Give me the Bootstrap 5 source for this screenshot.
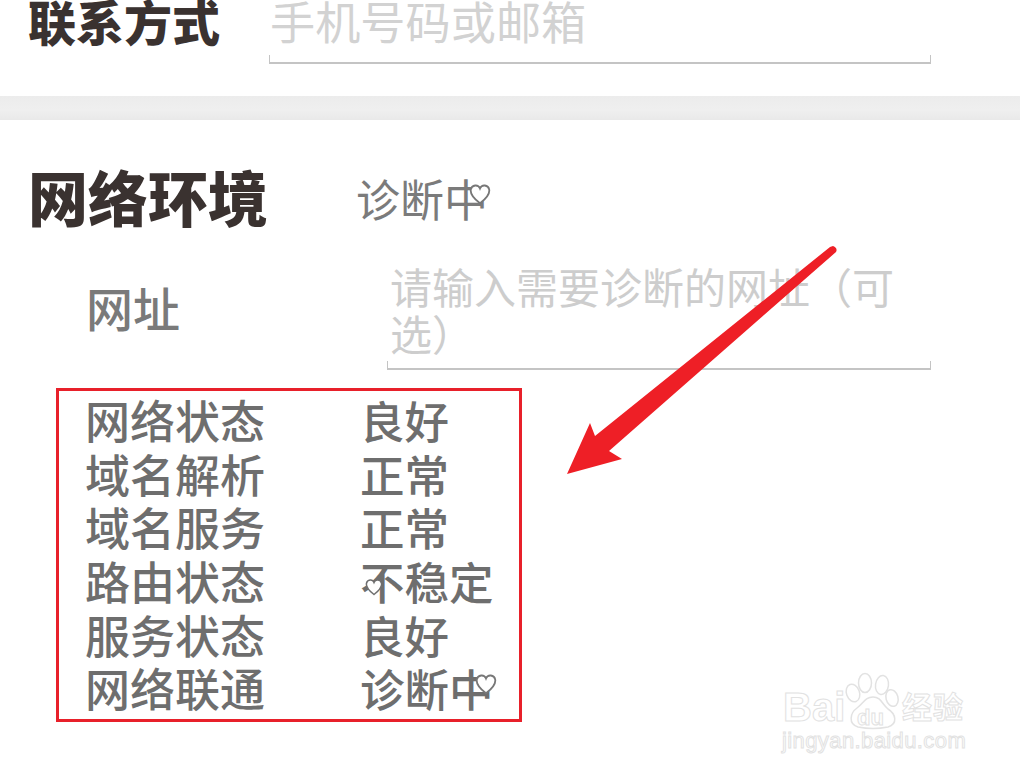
<!DOCTYPE html>
<html lang="zh-CN">
<head>
<meta charset="utf-8">
<title>网络环境</title>
<link href="https://cdn.jsdelivr.net/npm/bootstrap@5.3.0/dist/css/bootstrap.min.css" rel="stylesheet">
<style>
html,body{height:771px;overflow:hidden;background:#fff}
body{position:relative;font-family:"Liberation Sans","Noto Sans CJK SC",sans-serif}
.sheet{width:1020px;height:771px}
.contact-row{height:96px;padding-left:28px}
.contact-label{width:241px;font-size:48px;line-height:50px;font-weight:900;color:#3a3230}
.field-wrap{width:662px;height:64px;position:relative}
.field-line{border-bottom:2px solid #c4c4c4;border-left:1px solid #c4c4c4;border-right:1px solid #c4c4c4;height:9px;position:absolute;left:0;right:0;bottom:0}
.ph-text{color:#d2d2d2;font-size:45.2px;line-height:50px;padding-left:1px}
.band{height:24px;background:linear-gradient(#ececec,#efefef 60%,#e9e9e9)}
.env-head{padding:46px 0 0 28px;height:146px}
.env-title{width:328px;font-size:60px;line-height:72px;font-weight:900;color:#3a3230}
.env-state{font-size:44px;line-height:72px;color:#7b7b7b;font-weight:400}
.url-row{padding-left:86px;height:122px}
.url-label{width:301px;font-size:47px;line-height:50px;color:#7a7a7a;margin-top:20px;font-weight:500}
.url-field{width:544px;height:104px;position:relative}
.url-ph{color:#cdcdcd;font-size:42px;line-height:47px;padding:0 30px 0 3px}
.status-box{width:466px;height:334px;margin-left:56px;border:3px solid #e8202a;padding:6px 0 0 26px}
.status-row{height:53.7px;font-size:44.5px;line-height:53.7px;color:#6e6e6e;font-weight:500}
.status-name{width:275px;font-size:45px}
.heart-ch{position:relative}
.heart-icon{position:absolute;fill:#fff;stroke:#777;stroke-width:2}
.heart-zhong{right:-3px;top:6px;width:22px;height:22px}
.heart-bu{left:5px;top:18px;width:18px;height:18px;stroke:#6e6e6e}
.arrow-layer{position:absolute;left:0;top:0;pointer-events:none}
.mark-wrap{position:absolute;left:782px;top:660px;width:190px;height:100px}
.mark-paw{position:absolute;left:62px;top:12px}
.mark-word{position:absolute;color:#fff;-webkit-text-stroke:1px #e2e2e2;font-weight:700;white-space:nowrap}
.mark-bai{left:1px;top:22px;font-size:40px;line-height:50px}
.mark-du{left:75px;top:45px;font-size:22px;line-height:26px}
.mark-cn{left:120px;top:28px;font-size:30px;line-height:40px;letter-spacing:1px}
.mark-url{left:0;top:66px;font-size:22px;line-height:30px;font-weight:400;letter-spacing:.4px}
</style>
</head>
<body>
<div class="sheet">
  <div class="contact-row d-flex align-items-start">
    <div class="contact-label">联系方式</div>
    <div class="field-wrap">
      <div class="ph-text">手机号码或邮箱</div>
      <div class="field-line"></div>
    </div>
  </div>
  <div class="band"></div>
  <div class="env-head d-flex align-items-start">
    <div class="env-title">网络环境</div>
    <div class="env-state">诊断<span class="heart-ch">中<svg class="heart-icon heart-zhong" viewBox="0 0 24 24"><path d="M12 22 C4 16 1 12 2 7 C3 2 10 1 12 6 C14 1 21 2 22 7 C23 12 20 16 12 22 Z"/></svg></span></div>
  </div>
  <div class="url-row d-flex align-items-start">
    <div class="url-label">网址</div>
    <div class="url-field">
      <div class="url-ph">请输入需要诊断的网址（可选）</div>
      <div class="field-line"></div>
    </div>
  </div>
  <div class="status-box">
    <div class="status-row d-flex"><div class="status-name">网络状态</div><div>良好</div></div>
    <div class="status-row d-flex"><div class="status-name">域名解析</div><div>正常</div></div>
    <div class="status-row d-flex"><div class="status-name">域名服务</div><div>正常</div></div>
    <div class="status-row d-flex"><div class="status-name">路由状态</div><div><span class="heart-ch">不<svg class="heart-icon heart-bu" viewBox="0 0 24 24"><path d="M12 22 C4 16 1 12 2 7 C3 2 10 1 12 6 C14 1 21 2 22 7 C23 12 20 16 12 22 Z"/></svg></span>稳定</div></div>
    <div class="status-row d-flex"><div class="status-name">服务状态</div><div>良好</div></div>
    <div class="status-row d-flex"><div class="status-name">网络联通</div><div>诊断<span class="heart-ch">中<svg class="heart-icon heart-zhong" viewBox="0 0 24 24"><path d="M12 22 C4 16 1 12 2 7 C3 2 10 1 12 6 C14 1 21 2 22 7 C23 12 20 16 12 22 Z"/></svg></span></div></div>
  </div>
</div>
<svg class="arrow-layer" width="1020" height="771" viewBox="0 0 1020 771">
  <path d="M833 246 Q838 248 836 252 L609 451 L622 459 L567 474 L590 423 L595 436 L830 247 Z" fill="#ee1f26"/>
</svg>
<div class="mark-wrap">
  <svg class="mark-paw" width="58" height="60" viewBox="0 0 58 60" fill="#fff" stroke="#e2e2e2" stroke-width="1.5">
    <ellipse cx="9" cy="21" rx="6.5" ry="9" transform="rotate(-20 9 21)"/>
    <ellipse cx="21" cy="11" rx="6.5" ry="9.5"/>
    <ellipse cx="38" cy="13" rx="6.5" ry="9.5" transform="rotate(8 38 13)"/>
    <ellipse cx="48" cy="26" rx="6" ry="8.5" transform="rotate(-15 48 26)"/>
    <path d="M14 55 C4 52 6 41 13 36 C20 31 21 25 29 25 C37 25 38 32 44 37 C52 42 54 52 44 55 C34 57 24 57 14 55 Z"/>
  </svg>
  <span class="mark-word mark-bai">Bai</span>
  <span class="mark-word mark-du">du</span>
  <span class="mark-word mark-cn">经验</span>
  <span class="mark-word mark-url">jingyan.baidu.com</span>
</div>
</body>
</html>
